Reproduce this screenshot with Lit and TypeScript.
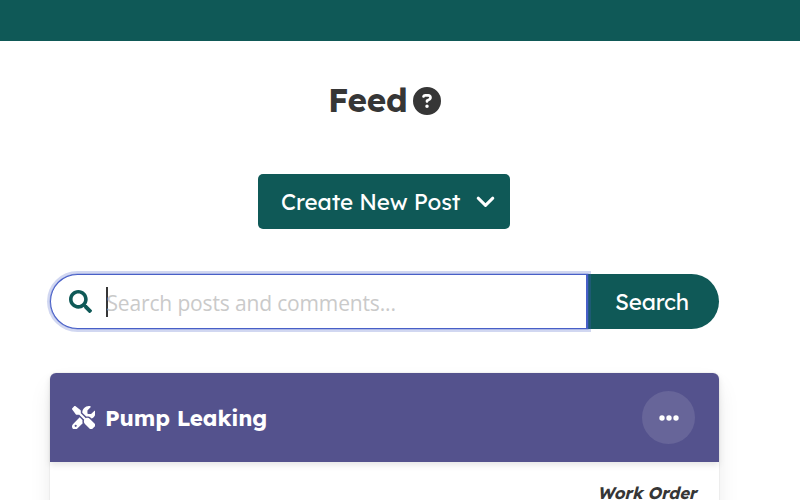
import { LitElement, html, css, svg } from "lit";
import { customElement } from "lit/decorators.js";

const icon = (cls: string, box: string, d: string) =>
  html`<svg class="icon ${cls}" viewBox=${box} aria-hidden="true">${svg`<path d=${d} fill="currentColor"/>`}</svg>`;

const QUESTION =
  "M256 512A256 256 0 1 0 256 0a256 256 0 1 0 0 512zM169.8 165.3c7.9-22.3 29.1-37.3 52.8-37.3h58.3c34.9 0 63.1 28.3 63.1 63.1c0 22.6-12.1 43.5-31.7 54.8L280 264.4c-.2 13-10.9 23.6-24 23.6c-13.3 0-24-10.7-24-24V250.5c0-8.6 4.6-16.5 12.1-20.8l44.3-25.4c4.7-2.7 7.6-7.7 7.6-13.1c0-8.4-6.8-15.1-15.1-15.1H222.6c-3.4 0-6.4 2.1-7.5 5.3l-.4 1.2c-4.4 12.5-18.2 19-30.6 14.6s-19-18.2-14.6-30.6l.4-1.2zM224 352a32 32 0 1 1 64 0 32 32 0 1 1 -64 0z";
const GLASS =
  "M505 442.7L405.3 343c-4.5-4.5-10.6-7-17-7H372c27.6-35.3 44-79.7 44-128C416 93.1 322.9 0 208 0S0 93.1 0 208s93.1 208 208 208c48.3 0 92.7-16.4 128-44v16.3c0 6.4 2.5 12.5 7 17l99.7 99.7c9.4 9.4 24.6 9.4 33.9 0l28.3-28.3c9.4-9.4 9.4-24.6.1-34zM208 336c-70.7 0-128-57.2-128-128 0-70.7 57.2-128 128-128 70.7 0 128 57.2 128 128 0 70.7-57.2 128-128 128z";
const TOOLS =
  "M78.6 5C69.1-2.4 55.6-1.5 47 7L7 47c-8.5 8.5-9.4 22-2.1 31.6l80 104c4.5 5.9 11.6 9.4 19 9.4h54.1l109 109c-14.7 29-10 65.4 14.3 89.6l112 112c12.5 12.5 32.8 12.5 45.3 0l64-64c12.5-12.5 12.5-32.8 0-45.3l-112-112c-24.2-24.2-60.6-29-89.6-14.3l-109-109V104c0-7.5-3.5-14.5-9.4-19L78.6 5zM19.9 396.1C7.2 408.8 0 426.1 0 444.1C0 481.6 30.4 512 67.9 512c18 0 35.3-7.2 48-19.9L233.7 374.3c-7.8-20.9-9-43.6-3.6-65.1l-61.7-61.7L19.9 396.1zM512 144c0-10.5-1.1-20.7-3.2-30.5c-2.4-11.2-16.1-14.1-24.2-6l-63.9 63.9c-3 3-7.1 4.7-11.3 4.7H352c-8.8 0-16-7.2-16-16V102.6c0-4.2 1.7-8.3 4.7-11.3l63.9-63.9c8.1-8.1 5.2-21.8-6-24.2C388.7 1.1 378.5 0 368 0C288.5 0 224 64.5 224 144l0 .8 85.3 85.3c36-9.1 75.8 .5 104 28.7L429 274.5c49-23 83-72.8 83-130.5zM56 432a24 24 0 1 1 48 0 24 24 0 1 1 -48 0z";

@customElement("app-root")
export class AppRoot extends LitElement {
  static styles = css`
    :host {
      display: block;
      height: 500px;
      overflow: hidden;
      background: #fff;
      color: #363636;
      font-family: Lexend, Lato, sans-serif;
    }
    * { box-sizing: border-box; }
    .icon { display: block; flex: none; }
    .topbar { height: 41px; background: #0f5957; }
    .page { width: 669px; margin-left: 49.5px; }
    .title {
      display: flex;
      align-items: center;
      height: 40px;
      margin: 40px 0 0 278.4px;
      font-size: 33.2px;
      font-weight: 700;
      line-height: 38px;
      letter-spacing: -0.3px;
    }
    .title span { width: 85.6px; height: 40px; white-space: nowrap; }
    .question { width: 28px; height: 28px; }
    .create {
      display: flex;
      align-items: center;
      width: 252px;
      height: 55px;
      margin: 53px 0 0 208.5px;
      padding: 0 15px 0 23px;
      border: 0;
      border-radius: 5px;
      background: #0f5957;
      color: #fff;
      font: 420 22.4px/36px Lexend, Lato, sans-serif;
      letter-spacing: -0.1px;
      white-space: nowrap;
    }
    .create span { width: 195px; text-align: left; }
    .chevron { width: 19px; height: 12px; }
    .search { display: flex; height: 55px; margin-top: 45px; }
    .field {
      position: relative;
      z-index: 1;
      display: flex;
      align-items: center;
      width: 538px;
      padding-left: 18px;
      border: 1px solid #485fc7;
      border-right-width: 2px;
      border-radius: 28px 0 0 28px;
      background: #fff;
      box-shadow: 0 0 0 0.5px rgba(72, 95, 199, 0.5), 0 0 0 3px rgba(72, 95, 199, 0.25);
      font: 400 21px/32px "Segoe UI", "Open Sans", "Noto Sans", sans-serif;
      letter-spacing: -0.15px;
      color: #cacaca;
      white-space: nowrap;
    }
    .glass { width: 23px; height: 23px; margin-right: 14.5px; color: #0f5957; }
    .caret { width: 1.5px; height: 30px; background: #363636; }
    .placeholder { margin-left: -1px; padding-top: 2px; }
    .submit {
      width: 131px;
      height: 55px;
      padding: 0 0 0 27.5px;
      border: 0;
      border-radius: 0 28px 28px 0;
      background: #0f5957;
      color: #fff;
      font: 420 22.4px/36px Lexend, Lato, sans-serif;
      letter-spacing: -0.2px;
      text-align: left;
    }
    .card {
      height: 200px;
      margin-top: 44px;
      border-radius: 6px;
      background: #fff;
      box-shadow: 0 12px 24px -3px rgba(10, 10, 10, 0.1), 0 0 0 1px rgba(10, 10, 10, 0.03);
    }
    .head {
      display: flex;
      align-items: center;
      height: 89px;
      padding: 0 23.5px 0 22px;
      border-radius: 6px 6px 0 0;
      background: #54528d;
      color: #fff;
      box-shadow: 0 3px 6px rgba(10, 10, 10, 0.1);
    }
    .tools { width: 23.5px; height: 23.5px; }
    .name { flex: 1; margin-left: 10px; font-size: 22.4px; font-weight: 720; letter-spacing: -0.15px; }
    .more {
      display: flex;
      align-items: center;
      justify-content: center;
      width: 53px;
      height: 53px;
      padding: 0;
      border: 0;
      border-radius: 50%;
      background: #676599;
      color: #fff;
    }
    .dots { width: 20px; height: 6px; }
    .kind {
      padding: 18.5px 22.1px 0 0;
      font-size: 16.8px;
      line-height: 24px;
      font-style: italic;
      font-weight: 680;
      letter-spacing: -0.1px;
      text-align: right;
    }
  `;

  render() {
    return html`
      <div class="topbar"></div>
      <main class="page">
        <h1 class="title"><span>Feed</span>${icon("question", "0 0 512 512", QUESTION)}</h1>
        <button class="create">
          <span>Create New Post</span>
          <svg class="icon chevron" viewBox="0 0 19 12" aria-hidden="true">
            <path d="M2.2 2.2 9.5 9.3 16.8 2.2" fill="none" stroke="currentColor" stroke-width="3" stroke-linecap="round" stroke-linejoin="round" />
          </svg>
        </button>
        <div class="search">
          <div class="field">
            ${icon("glass", "0 0 512 512", GLASS)}
            <span class="caret"></span>
            <span class="placeholder">Search posts and comments...</span>
          </div>
          <button class="submit">Search</button>
        </div>
        <article class="card">
          <header class="head">
            ${icon("tools", "0 0 512 512", TOOLS)}
            <span class="name">Pump Leaking</span>
            <button class="more" aria-label="More">
              <svg class="icon dots" viewBox="0 0 20 6" aria-hidden="true">
                <g fill="currentColor"><circle cx="3" cy="3" r="2.7" /><circle cx="10" cy="3" r="2.7" /><circle cx="17" cy="3" r="2.7" /></g>
              </svg>
            </button>
          </header>
          <div class="kind">Work Order</div>
        </article>
      </main>
    `;
  }
}
